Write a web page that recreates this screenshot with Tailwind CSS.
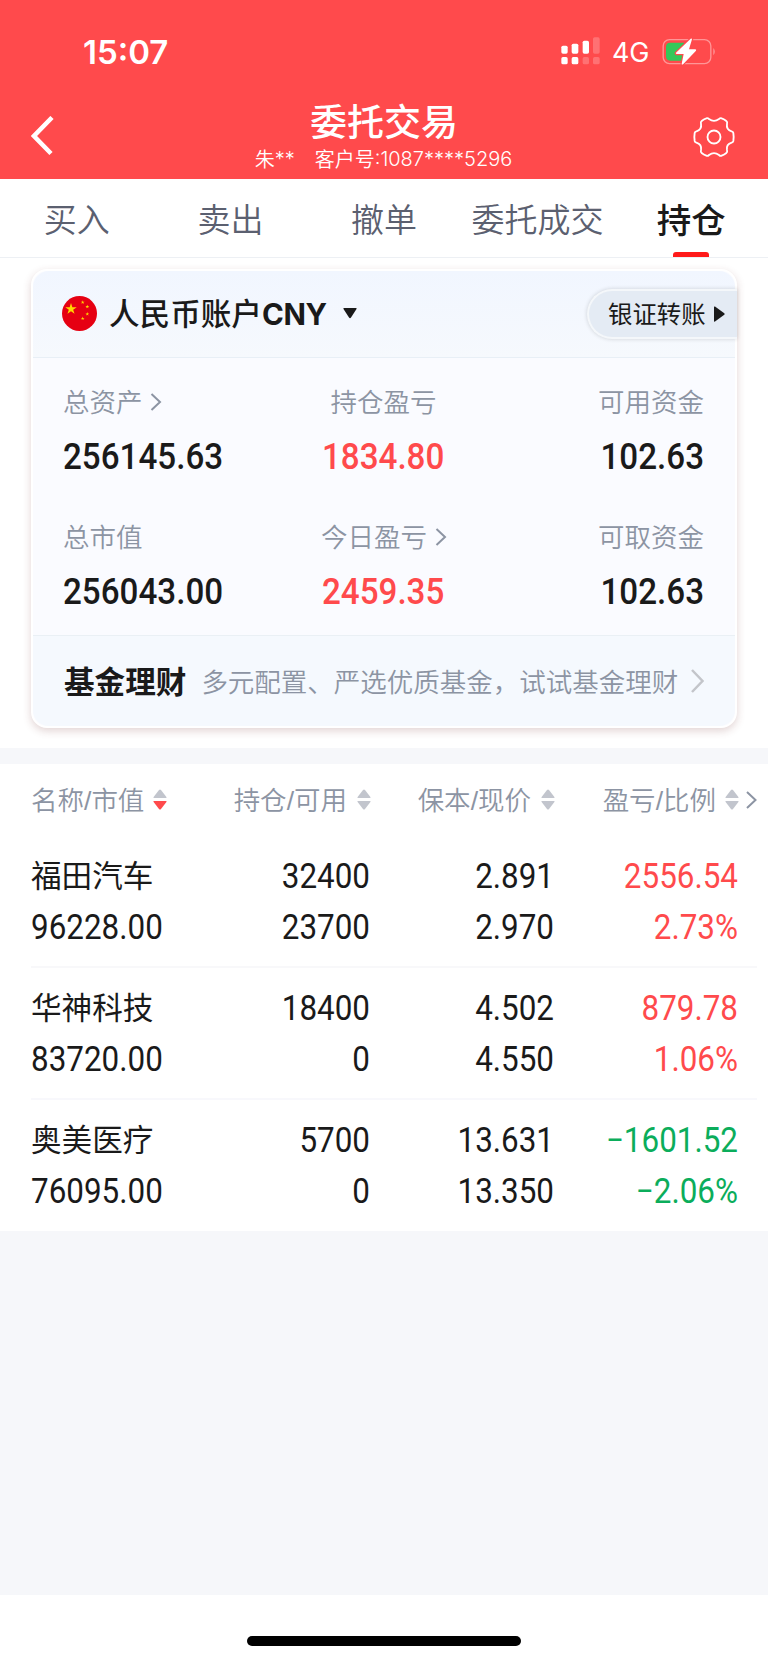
<!DOCTYPE html>
<html lang="zh-CN">
<head>
<meta charset="utf-8">
<title>委托交易</title>
<script src="https://cdn.jsdelivr.net/npm/@tailwindcss/browser@4"></script>
</head>
<body class="w-[768px] h-[1663px] overflow-hidden flex flex-col bg-[#f6f7fa] text-[#1a1a1a] font-['Noto_Sans_CJK_SC',sans-serif] whitespace-nowrap">

<header class="h-[179px] shrink-0 bg-[#ff4a4c] text-white flex flex-col">
  <div class="h-[98px] pt-[6px] pl-[83px] pr-[51px] flex items-center justify-between font-['Inter',sans-serif]">
    <span class="text-[33px] leading-none font-semibold">15:07</span>
    <div class="flex items-center">
      <svg class="w-[39px] h-[28px] -mt-[2px]" viewBox="0 0 117 84" fill="#fff">
        <rect x="1" y="26" width="19" height="24" rx="5"/><rect x="32" y="20" width="20" height="30" rx="5"/><rect x="65" y="11" width="19" height="39" rx="5"/><rect x="96" y="1" width="20" height="49" rx="5" opacity=".22"/>
        <rect x="1" y="60" width="19" height="22" rx="5"/><rect x="32" y="60" width="20" height="22" rx="5"/><rect x="65" y="60" width="19" height="22" rx="5" opacity=".22"/><rect x="96" y="60" width="20" height="22" rx="5" opacity=".22"/>
      </svg>
      <span class="ml-3 mt-[1px] w-[39px] text-[27px] leading-none font-normal tracking-[-0.3px]">4G</span>
      <svg class="ml-[11px] w-[55px] h-[28px] -mt-[1px]" viewBox="0 0 165 84">
        <rect x="3.500" y="5" width="143" height="72" rx="19" fill="none" stroke="#fff" stroke-opacity=".42" stroke-width="4"/>
        <path d="M154 30Q163 41 154 52Z" fill="#fff" fill-opacity=".42"/>
        <path d="M25 14H66V68H25Q12 68 12 55V27Q12 14 25 14Z" fill="#34c759"/>
        <path d="M86 2L42 44Q40 47 44 48H65L59 77Q59 82 64 78L102 38Q104 35 100 34H81L90 4Q90 0 86 2Z" fill="#fff" stroke="#ff4a4c" stroke-width="7" paint-order="stroke"/>
      </svg>
    </div>
  </div>
  <div class="h-[81px] flex items-start justify-between pl-[31px] pr-[33px]">
    <svg class="w-[60px] h-[40px] mt-[18px]" viewBox="0 0 60 40" fill="none" stroke="#fff" stroke-width="4.500"><path d="M21 1.500L3 20L20 37.500"/></svg>
    <div class="flex flex-col items-center">
      <h1 class="text-[37px] leading-[46px] h-[46px] -mt-[1px] pl-[2px] font-medium">委托交易</h1>
      <p class="flex items-center text-[20px] leading-[30px] h-[30px] mt-[1px] pl-px font-[350]"><span>朱</span><span class="font-['Inter',sans-serif]">**</span><span class="ml-5">客户号</span><span class="font-['Inter',sans-serif]">:1087****5296</span></p>
    </div>
    <svg class="w-[42px] h-[42px] mt-[18px] ml-[18px]" viewBox="-63 -63 126 126" fill="none" stroke="#fff" stroke-width="5.500" stroke-linejoin="round">
      <path d="M-23 -56Q-19 -58 -15 -54Q0 -43 15 -54Q19 -58 23 -56Q31 -53 37 -48Q41 -45 39 -39Q36 -22 53 -17Q57 -16 58 -12Q60 0 58 12Q57 16 53 17Q36 22 39 39Q41 45 37 48Q31 53 23 56Q19 58 15 54Q0 43 -15 54Q-19 58 -23 56Q-31 53 -37 48Q-41 45 -39 39Q-36 22 -53 17Q-57 16 -58 12Q-60 0 -58 -12Q-57 -16 -53 -17Q-36 -22 -39 -39Q-41 -45 -37 -48Q-31 -53 -23 -56Z"/>
      <circle r="19.500"/>
    </svg>
  </div>
</header>

<nav class="h-[79px] shrink-0 bg-white border-b border-[#edf0f4] grid grid-cols-5 text-center text-[33px] leading-[79px] font-[350] text-[#5b6070]">
  <span>买入</span><span>卖出</span><span>撤单</span><span>委托成交</span>
  <span class="relative text-[34.500px] leading-[78px] font-medium text-[#1a1a1a]">持仓<i class="absolute left-[59px] bottom-px w-9 h-[5px] rounded-t-[3px] bg-[#ff1a1a]"></i></span>
</nav>

<main class="h-[490px] shrink-0 bg-white pt-[11px] px-[31px]">
  <section class="h-[459px] rounded-2xl border-2 border-white bg-[#fafbff] shadow-[0_3px_9px_rgba(110,40,40,0.2)] flex flex-col">
    <div class="h-[87px] rounded-t-2xl bg-linear-to-b from-[#f1f6ff] to-[#f6f9fd] border-b border-[#e8eff6] flex items-center">
      <svg class="w-[35px] h-[35px] ml-[29px] -mt-[2px]" viewBox="0 0 35 35">
        <defs><path id="star" d="M0 -1L.225 -.309L.951 -.309L.363 .118L.588 .809L0 .382L-.588 .809L-.363 .118L-.951 -.309L-.225 -.309Z"/></defs>
        <circle cx="17.500" cy="17.500" r="17.500" fill="#e60012"/>
        <g fill="#ffd800"><use href="#star" transform="translate(9 13) scale(6)"/><use href="#star" transform="translate(20.700 6.300) scale(2)"/><use href="#star" transform="translate(25.300 10.700) scale(2)"/><use href="#star" transform="translate(25.300 18) scale(2)"/><use href="#star" transform="translate(20.700 22.500) scale(2)"/></g>
      </svg>
      <span class="ml-3 -mt-[4px] text-[30.600px] leading-[40px] font-medium">人民币账户</span>
      <span class="w-[65px] -mt-px text-[29.500px] leading-[40px] font-bold tracking-[-0.4px] font-['Inter',sans-serif]">CNY</span>
      <svg class="ml-4 w-[14px] h-[11px] -mt-[2px]" viewBox="0 0 14 11"><path d="M1 0H13Q14 0 13.500 1L8 9.500Q7 11 6 9.500L.5 1Q0 0 1 0Z" fill="#1a1a1a"/></svg>
      <div class="ml-auto -mr-0.5 -mt-px w-[150px] h-[50px] rounded-l-full border-2 border-r-0 border-[#f4f7fa] bg-[#e4ebf4] shadow-[0_0_4px_rgba(0,0,0,0.16)] flex items-center pl-[19px]">
        <span class="text-[24.400px] leading-[40px] font-normal -mt-[1px]">银证转账</span>
        <svg class="ml-[8px] w-[11px] h-[16px]" viewBox="0 0 11 16"><path d="M0 1Q0 0 1 .6L10.300 7.300Q11 8 10.300 8.700L1 15.400Q0 16 0 15Z" fill="#1a1a1a"/></svg>
      </div>
    </div>
    <div class="h-[278px] pt-[23px] pl-[30px] pr-[31px] grid grid-cols-3 grid-rows-[135px_135px] border-b border-[#eaf0f5]">
      <div class="flex flex-col items-start">
        <p class="h-10 flex items-center text-[26.500px] leading-[40px] font-[350] text-[#8c94a3]">总资产<svg class="ml-[7px] mt-[1px] w-3 h-5" viewBox="0 0 12 20" fill="none" stroke="#8c94a3" stroke-width="2"><path d="M1.500 2L10 10L1.500 18"/></svg></p>
        <p class="mt-[13px] h-[44px] text-[37.500px] leading-[44px] font-medium font-['Roboto',sans-serif] origin-left scale-x-[.885]">256145.63</p>
      </div>
      <div class="flex flex-col items-center">
        <p class="h-10 text-[26.500px] leading-[40px] font-[350] text-[#8c94a3]">持仓盈亏</p>
        <p class="mt-[13px] h-[44px] text-[37.500px] leading-[44px] font-medium font-['Roboto',sans-serif] scale-x-[.885] text-[#ff4a4c]">1834.80</p>
      </div>
      <div class="flex flex-col items-end">
        <p class="h-10 text-[26.500px] leading-[40px] font-[350] text-[#8c94a3]">可用资金</p>
        <p class="mt-[13px] h-[44px] text-[37.500px] leading-[44px] font-medium font-['Roboto',sans-serif] origin-right scale-x-[.885]">102.63</p>
      </div>
      <div class="flex flex-col items-start">
        <p class="h-10 text-[26.500px] leading-[40px] font-[350] text-[#8c94a3]">总市值</p>
        <p class="mt-[13px] h-[44px] text-[37.500px] leading-[44px] font-medium font-['Roboto',sans-serif] origin-left scale-x-[.885]">256043.00</p>
      </div>
      <div class="flex flex-col items-center">
        <p class="h-10 pl-px flex items-center text-[26.500px] leading-[40px] font-[350] text-[#8c94a3]">今日盈亏<svg class="ml-2 mt-[1px] w-3 h-5" viewBox="0 0 12 20" fill="none" stroke="#8c94a3" stroke-width="2"><path d="M1.500 2L10 10L1.500 18"/></svg></p>
        <p class="mt-[13px] h-[44px] text-[37.500px] leading-[44px] font-medium font-['Roboto',sans-serif] scale-x-[.885] text-[#ff4a4c]">2459.35</p>
      </div>
      <div class="flex flex-col items-end">
        <p class="h-10 text-[26.500px] leading-[40px] font-[350] text-[#8c94a3]">可取资金</p>
        <p class="mt-[13px] h-[44px] text-[37.500px] leading-[44px] font-medium font-['Roboto',sans-serif] origin-right scale-x-[.885]">102.63</p>
      </div>
    </div>
    <div class="flex-1 rounded-b-2xl bg-[#f5f9fe] flex items-center pl-[31px] pr-[31px]">
      <span class="text-[30.600px] leading-[40px] font-bold -mt-[3px]">基金理财</span>
      <span class="ml-[15px] text-[26.500px] leading-[40px] font-[350] text-[#8c94a3]">多元配置、严选优质基金，试试基金理财</span>
      <svg class="ml-auto w-[13px] h-6 -mt-[1px]" viewBox="0 0 13 24" fill="none" stroke="#c3c5ca" stroke-width="2.500"><path d="M1 1L11.500 12L1 23"/></svg>
    </div>
  </section>
</main>

<section class="mt-4 h-[467px] shrink-0 bg-white flex flex-col">
  <svg class="hidden"><defs>
    <path id="up" d="M1 9Q0 9 .6 8L6 1Q7 0 8 1L13.400 8Q14 9 13 9Z"/>
    <path id="down" d="M1 12Q0 12 .6 13L6 20Q7 21 8 20L13.400 13Q14 12 13 12Z"/>
  </defs></svg>
  <div class="h-[72px] pl-[31px] grid grid-cols-[154px_185px_184px_214px] items-center text-[26.500px] leading-[40px] font-[350] text-[#8c94a3]">
    <div class="flex items-center"><span class="-mt-px">名称<span class="font-['Liberation_Sans',sans-serif]">/</span>市值</span><svg class="ml-[9px] -mt-px shrink-0 w-[14px] h-[21px]" fill="#c2c5cd"><use href="#up"/><use href="#down" fill="#ff4a4c"/></svg></div>
    <div class="flex items-center justify-end -mr-px"><span class="-mt-px">持仓<span class="font-['Liberation_Sans',sans-serif]">/</span>可用</span><svg class="ml-[10px] -mt-px shrink-0 w-[14px] h-[21px]" fill="#c2c5cd"><use href="#up"/><use href="#down"/></svg></div>
    <div class="flex items-center justify-end -mr-px"><span class="-mt-px">保本<span class="font-['Liberation_Sans',sans-serif]">/</span>现价</span><svg class="ml-[10px] -mt-px shrink-0 w-[14px] h-[21px]" fill="#c2c5cd"><use href="#up"/><use href="#down"/></svg></div>
    <div class="flex items-center justify-end pr-[11px]"><span class="-mt-px">盈亏<span class="font-['Liberation_Sans',sans-serif]">/</span>比例</span><svg class="ml-[9px] -mt-px shrink-0 w-[14px] h-[21px]" fill="#c2c5cd"><use href="#up"/><use href="#down"/></svg><svg class="ml-[7px] w-[11px] h-5" viewBox="0 0 11 20" fill="none" stroke="#8c94a3" stroke-width="2"><path d="M1 2L9.500 10L1 18"/></svg></div>
  </div>

  <div class="h-[132px] ml-[31px] mr-[11px] pt-[15px] border-b-2 border-[#f8f8fa] grid grid-cols-[154px_185px_184px_184px] grid-rows-[51px_51px] items-center text-right text-[34.500px] leading-[51px] font-['Roboto',sans-serif]">
    <span class="-mt-[4px] text-left text-[30.600px] font-normal font-['Noto_Sans_CJK_SC',sans-serif]">福田汽车</span><span class="origin-right scale-x-[.91]">32400</span><span class="origin-right scale-x-[.91]">2.891</span><span class="origin-right scale-x-[.91] text-[#ff4a4c]">2556.54</span>
    <span class="text-left origin-left scale-x-[.91]">96228.00</span><span class="origin-right scale-x-[.91]">23700</span><span class="origin-right scale-x-[.91]">2.970</span><span class="origin-right scale-x-[.91] text-[#ff4a4c]">2.73%</span>
  </div>
  <div class="h-[132px] ml-[31px] mr-[11px] pt-[15px] border-b-2 border-[#f8f8fc] grid grid-cols-[154px_185px_184px_184px] grid-rows-[51px_51px] items-center text-right text-[34.500px] leading-[51px] font-['Roboto',sans-serif]">
    <span class="-mt-[4px] text-left text-[30.600px] font-normal font-['Noto_Sans_CJK_SC',sans-serif]">华神科技</span><span class="origin-right scale-x-[.91]">18400</span><span class="origin-right scale-x-[.91]">4.502</span><span class="origin-right scale-x-[.91] text-[#ff4a4c]">879.78</span>
    <span class="text-left origin-left scale-x-[.91]">83720.00</span><span class="origin-right scale-x-[.91]">0</span><span class="origin-right scale-x-[.91]">4.550</span><span class="origin-right scale-x-[.91] text-[#ff4a4c]">1.06%</span>
  </div>
  <div class="h-[131px] ml-[31px] mr-[11px] pt-[15px] grid grid-cols-[154px_185px_184px_184px] grid-rows-[51px_51px] items-center text-right text-[34.500px] leading-[51px] font-['Roboto',sans-serif]">
    <span class="-mt-[4px] text-left text-[30.600px] font-normal font-['Noto_Sans_CJK_SC',sans-serif]">奥美医疗</span><span class="origin-right scale-x-[.91]">5700</span><span class="origin-right scale-x-[.91]">13.631</span><span class="origin-right scale-x-[.91] text-[#0bad5b]">−1601.52</span>
    <span class="text-left origin-left scale-x-[.91]">76095.00</span><span class="origin-right scale-x-[.91]">0</span><span class="origin-right scale-x-[.91]">13.350</span><span class="origin-right scale-x-[.91] text-[#0bad5b]">−2.06%</span>
  </div>
</section>

<footer class="mt-auto h-[68px] shrink-0 bg-white flex justify-center pt-[41px]">
  <div class="w-[274px] h-[10px] rounded-full bg-black"></div>
</footer>
</body>
</html>
